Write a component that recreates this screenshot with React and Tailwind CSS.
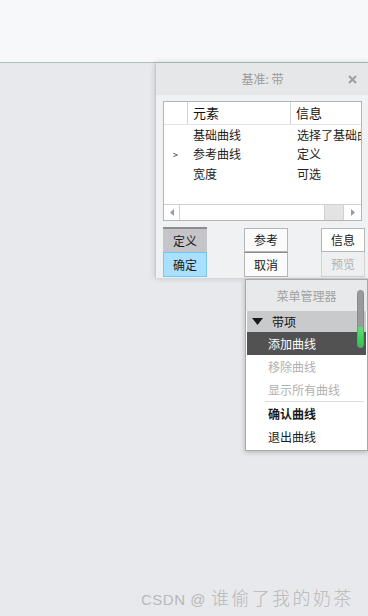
const FONT = { fontFamily: '"Noto Sans CJK SC", "Noto Sans", sans-serif' };

const ROWS = [
  { mark: '', name: '基础曲线', info: '选择了基础曲线' },
  { mark: '>', name: '参考曲线', info: '定义' },
  { mark: '', name: '宽度', info: '可选' },
];

function Btn({ children, className }) {
  return (
    <div className={`flex items-center justify-center w-[44px] text-[12px] ${className}`}>
      {children}
    </div>
  );
}

function MenuRow({ children, className = '' }) {
  return <div className={`h-[23px] flex items-center pl-[21px] text-[12px] ${className}`}>{children}</div>;
}

export default function App() {
  return (
    <div className="relative w-[368px] h-[616px] overflow-hidden bg-[#e8e9ec]" style={FONT}>
      <div className="h-[63px] bg-[#f7f8fa] border-b border-[#b3bdbd]" />

      {/* dialog window */}
      <div className="absolute left-[155px] top-[63px] w-[214px] h-[215px] bg-[#f0f1f2] border-l border-[#c6c8ca] shadow-[0_0_6px_rgba(0,0,0,0.18)] flex flex-col">
        <div className="h-[32px] bg-[#e6e7e8] flex items-center relative">
          <span className="flex-1 text-center text-[12px] text-[#9a9a9a]">基准: 带</span>
          <svg className="absolute left-[192px] top-[12px]" width="9" height="9" viewBox="0 0 9 9">
            <path d="M1 1L8 8M8 1L1 8" stroke="#a0a0a0" strokeWidth="2.2" />
          </svg>
        </div>

        <div className="ml-[7px] mt-[6px] w-[199px] h-[120px] bg-white border border-[#b4b4b4] flex flex-col">
          <div className="h-[23px] flex border-b border-[#e2e2e2] text-[13px] text-[#111]">
            <div className="w-[24px] border-r border-[#d4d4d4]" />
            <div className="w-[103px] border-r border-[#d4d4d4] pl-[5px] flex items-center">元素</div>
            <div className="flex-1 pl-[5px] flex items-center">信息</div>
          </div>
          <div className="flex-1">
            {ROWS.map((r) => (
              <div key={r.name} className="h-[19.5px] flex items-center text-[12px] text-[#222]">
                <div className="w-[25px] pl-[9px] text-[9px]">{r.mark}</div>
                <div className="w-[103px] pl-[4px]">{r.name}</div>
                <div className="flex-1 min-w-0 pl-[5px] whitespace-nowrap overflow-hidden">{r.info}</div>
              </div>
            ))}
          </div>
          <div className="h-[16px] flex border-t border-[#d0d0d0] bg-white">
            <div className="w-[16px] border-r border-[#d0d0d0] flex items-center justify-center">
              <svg width="4" height="7" viewBox="0 0 4 7"><path d="M4 0L0 3.5L4 7Z" fill="#9a9a9a" /></svg>
            </div>
            <div className="w-[145px] bg-white border-r border-[#d0d0d0]" />
            <div className="flex-1 bg-[#e3e3e3]" />
            <div className="w-[18px] border-l border-[#d0d0d0] flex items-center justify-center">
              <svg width="4" height="7" viewBox="0 0 4 7"><path d="M0 0L4 3.5L0 7Z" fill="#9a9a9a" /></svg>
            </div>
          </div>
        </div>

        <div className="ml-[7px] mt-[6px] flex">
          <div className="flex flex-col">
            <Btn className="h-[25px] bg-[#c5c5c9] border-t-2 border-[#8c8c8c] text-[#1a1a1a]">定义</Btn>
            <Btn className="h-[25px] bg-[#a9dfff] border border-[#72c6f0] text-[#1a1a1a]">确定</Btn>
          </div>
          <div className="flex flex-col ml-[37px] pt-[1px]">
            <Btn className="h-[24px] bg-[#fbfbfb] border border-[#b6b6b6] text-[#1a1a1a]">参考</Btn>
            <Btn className="h-[25px] bg-[#fbfbfb] border border-[#b6b6b6] border-t-[#8c8c8c] text-[#1a1a1a]">取消</Btn>
          </div>
          <div className="flex flex-col ml-[33px] pt-[1px]">
            <Btn className="h-[24px] bg-white border border-[#b6b6b6] text-[#1a1a1a]">信息</Btn>
            <Btn className="h-[25px] bg-[#eeeff0] border border-[#d4d4d4] border-t-0 text-[#b2b2b2]">预览</Btn>
          </div>
        </div>
      </div>

      {/* menu manager */}
      <div className="absolute left-[245px] top-[279px] w-[123px] h-[172px] bg-white border border-[#a8a8a8] shadow-[0_1px_5px_rgba(0,0,0,0.25)] flex flex-col">
        <div className="h-[31px] bg-[#e8e9eb] flex items-center justify-center text-[12px] text-[#a2a2a2]">菜单管理器</div>
        <div className="px-[1px] flex flex-col">
          <div className="h-[21px] bg-[#c9cacc] flex items-center text-[12px] text-[#111]">
            <svg className="ml-[5px]" width="11" height="7" viewBox="0 0 11 7"><path d="M0 0H11L5.5 7Z" fill="#1a1a1a" /></svg>
            <span className="ml-[9px]">带项</span>
          </div>
          <MenuRow className="bg-[#525252] text-white">添加曲线</MenuRow>
          <MenuRow className="text-[#b0b0b0]">移除曲线</MenuRow>
          <MenuRow className="text-[#b0b0b0]">显示所有曲线</MenuRow>
          <div className="ml-[18px] mr-[2px] h-px bg-[#dcdcdc]" />
          <MenuRow className="text-[#1a1a1a] font-semibold">确认曲线</MenuRow>
          <MenuRow className="text-[#1a1a1a]">退出曲线</MenuRow>
        </div>
        <div className="absolute left-[111px] top-[10px] w-[7px] h-[58px] rounded-full bg-[#9a9a9a] border border-[#8a8a8a] overflow-hidden flex flex-col justify-end">
          <div className="h-[20px] rounded-b-full bg-gradient-to-b from-[#5ee07a] to-[#27c44a]" />
        </div>
      </div>

      <div className="absolute left-[141px] top-[584px] flex items-baseline text-[#b8b8b8] whitespace-nowrap">
        <span className="text-[15px] tracking-[0.5px]" style={{ fontFamily: '"Liberation Sans", sans-serif' }}>CSDN @</span>
        <span className="ml-[5px] text-[18px] tracking-[2.4px] font-light">谁偷了我的奶茶</span>
      </div>
    </div>
  );
}
